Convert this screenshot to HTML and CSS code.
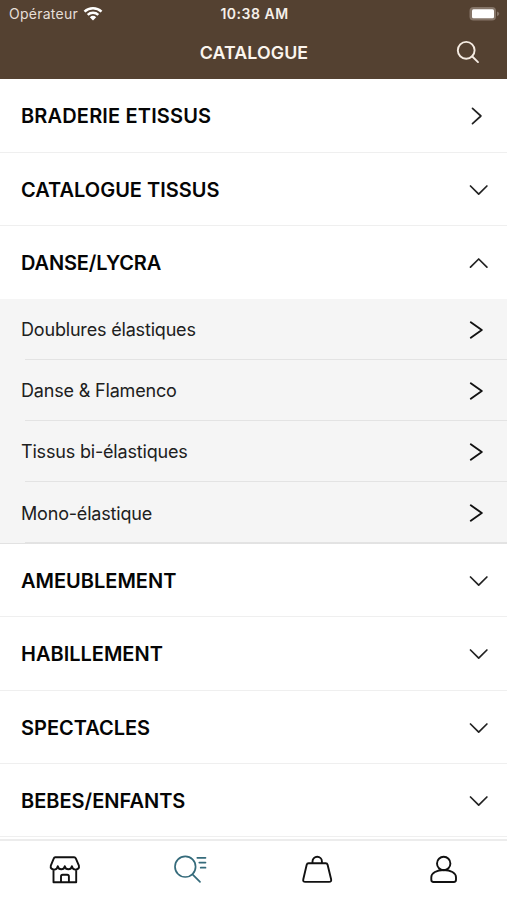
FILE: index.html
```html
<!DOCTYPE html>
<html lang="fr">
<head>
<meta charset="utf-8">
<title>Catalogue</title>
<link rel="stylesheet" href="styles.css">
</head>
<body>
<svg class="defs" aria-hidden="true">
  <symbol id="right" viewBox="0 0 20 20"><path d="M4.500 2.300 12.900 10l-8.400 7.700"/></symbol>
  <symbol id="down" viewBox="0 0 20 20"><path d="M2.500 6l8.200 8.200L18.900 6"/></symbol>
  <symbol id="up" viewBox="0 0 20 20"><path d="M2.500 14.200l8.200-8.200 8.200 8.200"/></symbol>
  <symbol id="sub" viewBox="0 0 20 20"><path d="M3.800 2.300 14.800 10 3.800 17.700"/></symbol>
</svg>
<div class="app">
  <header class="header">
    <div class="status">
      <div class="carrier"><span class="operator">Opérateur</span>
        <svg class="wifi" width="20" height="16" viewBox="0 0 20 16"><path d="M1.500 5.700a12.300 12.300 0 0 1 17 0M4.700 8.900a7.700 7.700 0 0 1 10.600 0"/><path class="solid" d="M6.800 11.300a4.700 4.700 0 0 1 6.400 0L10 14.600z"/></svg>
      </div>
      <span class="time">10:38 AM</span>
      <svg class="battery" width="32" height="16" viewBox="0 0 32 16"><rect class="shell" x="1.500" y="1" width="26.500" height="13.500" rx="4"/><rect class="charge" x="4" y="3.300" width="22" height="9" rx="1.500"/><path class="shell-tip" d="M29 5.500q2.300.8 2.300 2.300T29 10.200z"/></svg>
    </div>
    <div class="bar">
      <h1 class="title">CATALOGUE</h1>
      <svg class="search" width="24" height="24" viewBox="0 0 24 24"><circle cx="10.200" cy="10.300" r="8.400"/><path d="m16.300 16.500 5.700 5.600"/></svg>
    </div>
  </header>
  <main class="list">
    <div class="row"><span class="label wide">BRADERIE ETISSUS</span><svg class="chevron"><use href="#right"/></svg></div>
    <div class="row"><span class="label">CATALOGUE TISSUS</span><svg class="chevron"><use href="#down"/></svg></div>
    <div class="row open"><span class="label tight">DANSE/LYCRA</span><svg class="chevron"><use href="#up"/></svg></div>
    <div class="sublist">
      <div class="subrow"><span class="sublabel">Doublures élastiques</span><svg class="chevron sub"><use href="#sub"/></svg></div>
      <div class="subrow"><span class="sublabel">Danse &amp; Flamenco</span><svg class="chevron sub"><use href="#sub"/></svg></div>
      <div class="subrow"><span class="sublabel">Tissus bi-élastiques</span><svg class="chevron sub"><use href="#sub"/></svg></div>
      <div class="subrow"><span class="sublabel">Mono-élastique</span><svg class="chevron sub"><use href="#sub"/></svg></div>
    </div>
    <div class="row"><span class="label">AMEUBLEMENT</span><svg class="chevron"><use href="#down"/></svg></div>
    <div class="row"><span class="label">HABILLEMENT</span><svg class="chevron"><use href="#down"/></svg></div>
    <div class="row"><span class="label">SPECTACLES</span><svg class="chevron"><use href="#down"/></svg></div>
    <div class="row"><span class="label">BEBES/ENFANTS</span><svg class="chevron"><use href="#down"/></svg></div>
  </main>
  <nav class="tabs">
    <svg class="tab store" width="34" height="30" viewBox="0 0 34 30"><path d="M7.200 2.300h18.900q1.200 0 1.700 1.100l3.100 7.300c.6 2.300-1.100 3.900-3.300 3.900-2.100 0-3.400-1.500-3.700-3.400-.4 1.900-1.600 3.100-3.500 3.100s-3.200-1.200-3.600-3.100c-.4 1.900-1.600 3.100-3.500 3.100s-3.100-1.200-3.500-3.100c-.3 1.900-1.600 3.400-3.700 3.400-2.200 0-3.900-1.600-3.300-3.900l3-7.300q.4-1.100 1.400-1.100zM5.500 15v12.300h22.700V15M13 27v-5.500q0-1.700 1.700-1.700h4.500q1.700 0 1.700 1.700V27"/></svg>
    <svg class="tab active" width="34" height="30" viewBox="0 0 34 30"><circle cx="12.300" cy="11.700" r="10.300"/><path d="m19.500 19.300 7.500 7.500M24.300 2.800h8.200M26.300 7.600H32.500M27.700 12.700H32.500"/></svg>
    <svg class="tab" width="34" height="30" viewBox="0 0 34 30"><path d="M8.500 8.300h17.200q1.500 0 1.900 1.500l3.500 14.400q.6 2.700-2 2.700H5.300q-2.700 0-2-2.700L6.700 9.800q.4-1.500 1.800-1.500zM12.500 8.200V6.400a4.700 4.700 0 0 1 9.400 0v1.800"/></svg>
    <svg class="tab" width="34" height="30" viewBox="0 0 34 30"><circle cx="16.700" cy="8.500" r="6.700"/><path d="M4.300 24.800v-2.500c0-4.500 5.500-7.300 12.400-7.300s12.300 2.800 12.300 7.300v2.500q0 2.200-2.200 2.200H6.500q-2.200 0-2.200-2.200z"/></svg>
  </nav>
</div>
</body>
</html>
```
FILE: styles.css
```css
* { box-sizing: border-box; }
body { margin: 0; background: #fff; font-family: Inter, "Liberation Sans", sans-serif; }
svg { display: block; flex: none; fill: none; stroke-linecap: round; stroke-linejoin: round; }
.defs { width: 0; height: 0; position: absolute; }
.app { height: 900px; display: flex; flex-direction: column; overflow: hidden; }
.header { height: 79.300px; background: #544131; color: #fff; }
.status { height: 27px; display: grid; grid-template-columns: 1fr auto 1fr; align-items: center; padding: 0 7px 0 9px; }
.carrier { display: flex; align-items: center; gap: 5px; }
.operator { font-size: 14px; letter-spacing: .25px; color: #e6dfd8; }
.wifi { stroke: #fff; stroke-width: 2.500; stroke-linecap: butt; }
.wifi .solid { fill: #fff; stroke: none; }
.time { font-size: 14px; font-weight: 600; letter-spacing: .5px; color: #f5efe9; }
.battery { justify-self: end; }
.shell { fill: #857568; }
.charge { fill: #fff; }
.shell-tip { fill: #857568; }
.bar { height: 50px; display: grid; grid-template-columns: 1fr auto 1fr; align-items: center; padding: 0 27px 0 28px; }
.title { grid-column: 2; margin: 0; font-size: 17.800px; font-weight: 600; letter-spacing: .1px; color: #fbf5ee; }
.search { justify-self: end; stroke: #f5ebe2; stroke-width: 1.900; }
.list { flex: none; }
.row { height: 73.250px; display: flex; align-items: center; justify-content: space-between; padding: 2px 19px 0 21px; border-bottom: 1.500px solid #efefef; }
.row.open { border-color: #fff; }
.label { font-size: 20px; font-weight: 600; letter-spacing: 0; color: #050505; }
.label.wide { letter-spacing: .16px; }
.label.tight { letter-spacing: -.15px; }
.chevron { width: 20px; height: 20px; stroke: #222; stroke-width: 1.700; }
.chevron.sub { margin-right: 2px; stroke: #111; stroke-width: 1.900; }
.sublist { background: #f5f5f5; border-bottom: 1px solid #e2e2e2; height: 245px; }
.subrow { height: 61.150px; display: flex; align-items: center; justify-content: space-between; padding: 0 18px 0 21px; background: linear-gradient(#e3e3e3, #e3e3e3) 25px 100% / 100% 1.500px no-repeat; }
.sublabel { font-size: 18px; letter-spacing: -.18px; color: #202020; }
.tabs { margin-top: auto; height: 61px; display: grid; grid-template-columns: repeat(4, 1fr); justify-items: center; align-items: start; padding-top: 14px; border-top: 2px solid #ececec; background: #fff; }
.tab { stroke: #111; stroke-width: 1.900; }
.tab.store { margin-left: 3px; }
.tab.active { stroke: #356b7b; stroke-width: 1.700; }
```
